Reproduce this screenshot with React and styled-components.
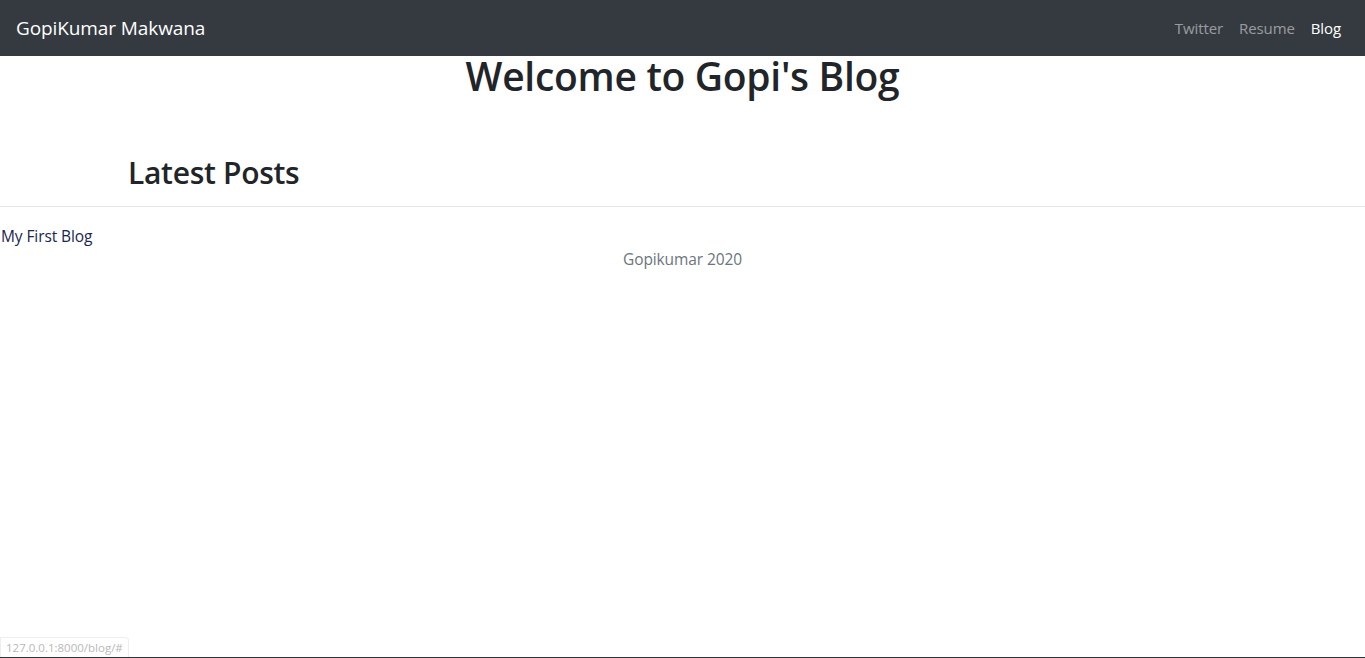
import React from 'react';
import styled, { createGlobalStyle } from 'styled-components';

const GlobalStyle = createGlobalStyle`
  *, *::before, *::after {
    box-sizing: border-box;
  }

  body {
    margin: 0;
    font-family: "Open Sans", "Noto Sans", "Liberation Sans", sans-serif;
    font-size: 16px;
    line-height: 1.5;
    color: #212529;
    background-color: #fff;
  }
`;

const Navbar = styled.nav`
  display: flex;
  justify-content: space-between;
  align-items: center;
  height: 56px;
  padding: 8px 16px;
  background-color: #343a40;
`;

const Brand = styled.a`
  font-size: 19px;
  line-height: 30px;
  color: #fff;
  text-decoration: none;
  letter-spacing: -0.1px;
`;

const NavLinks = styled.ul`
  display: flex;
  margin: 0;
  padding: 0;
  list-style: none;
`;

const NavItem = styled.li`
  a {
    display: block;
    padding: 8px;
    font-size: 15px;
    letter-spacing: -0.1px;
    text-decoration: none;
    color: ${props => (props.active ? '#fff' : 'rgba(255, 255, 255, 0.5)')};
  }
`;

const Title = styled.h1`
  margin: -3px 0 11px;
  font-size: 39px;
  font-weight: 600;
  line-height: 1.2;
  text-align: center;
  letter-spacing: -0.3px;
`;

const Section = styled.section`
  padding: 44px 0 0 128px;
`;

const SectionTitle = styled.h2`
  margin: 0;
  font-size: 30px;
  font-weight: 600;
  line-height: 35px;
  letter-spacing: -0.3px;
`;

const Divider = styled.hr`
  margin: 16px 0 18px;
  border: 0;
  border-top: 1px solid rgba(0, 0, 0, 0.1);
`;

const PostLink = styled.a`
  display: block;
  padding-left: 1px;
  color: #1a2550;
  text-decoration: none;
  font-size: 15.5px;
  letter-spacing: -0.1px;
`;

const Footer = styled.footer`
  text-align: center;
  color: #6c757d;
  font-size: 15.5px;
  letter-spacing: -0.1px;
`;

const StatusTip = styled.div`
  position: fixed;
  left: 0;
  bottom: 1px;
  padding: 1px 5px 0;
  font-size: 11.5px;
  line-height: 18px;
  color: #b8b8b8;
  background: #fff;
  border: 1px solid #eee;
  border-bottom: none;
  border-radius: 0 4px 0 0;
`;

const BottomEdge = styled.div`
  position: fixed;
  left: 0;
  right: 0;
  bottom: 0;
  height: 1px;
  background: #2e3338;
`;

export default function App() {
  return (
    <>
      <GlobalStyle />
      <Navbar>
        <Brand href="#">GopiKumar Makwana</Brand>
        <NavLinks>
          <NavItem><a href="#">Twitter</a></NavItem>
          <NavItem><a href="#">Resume</a></NavItem>
          <NavItem active><a href="#">Blog</a></NavItem>
        </NavLinks>
      </Navbar>
      <Title>Welcome to Gopi's Blog</Title>
      <Section>
        <SectionTitle>Latest Posts</SectionTitle>
      </Section>
      <Divider />
      <PostLink href="#">My First Blog</PostLink>
      <Footer>Gopikumar 2020</Footer>
      <StatusTip>127.0.0.1:8000/blog/#</StatusTip>
      <BottomEdge />
    </>
  );
}
